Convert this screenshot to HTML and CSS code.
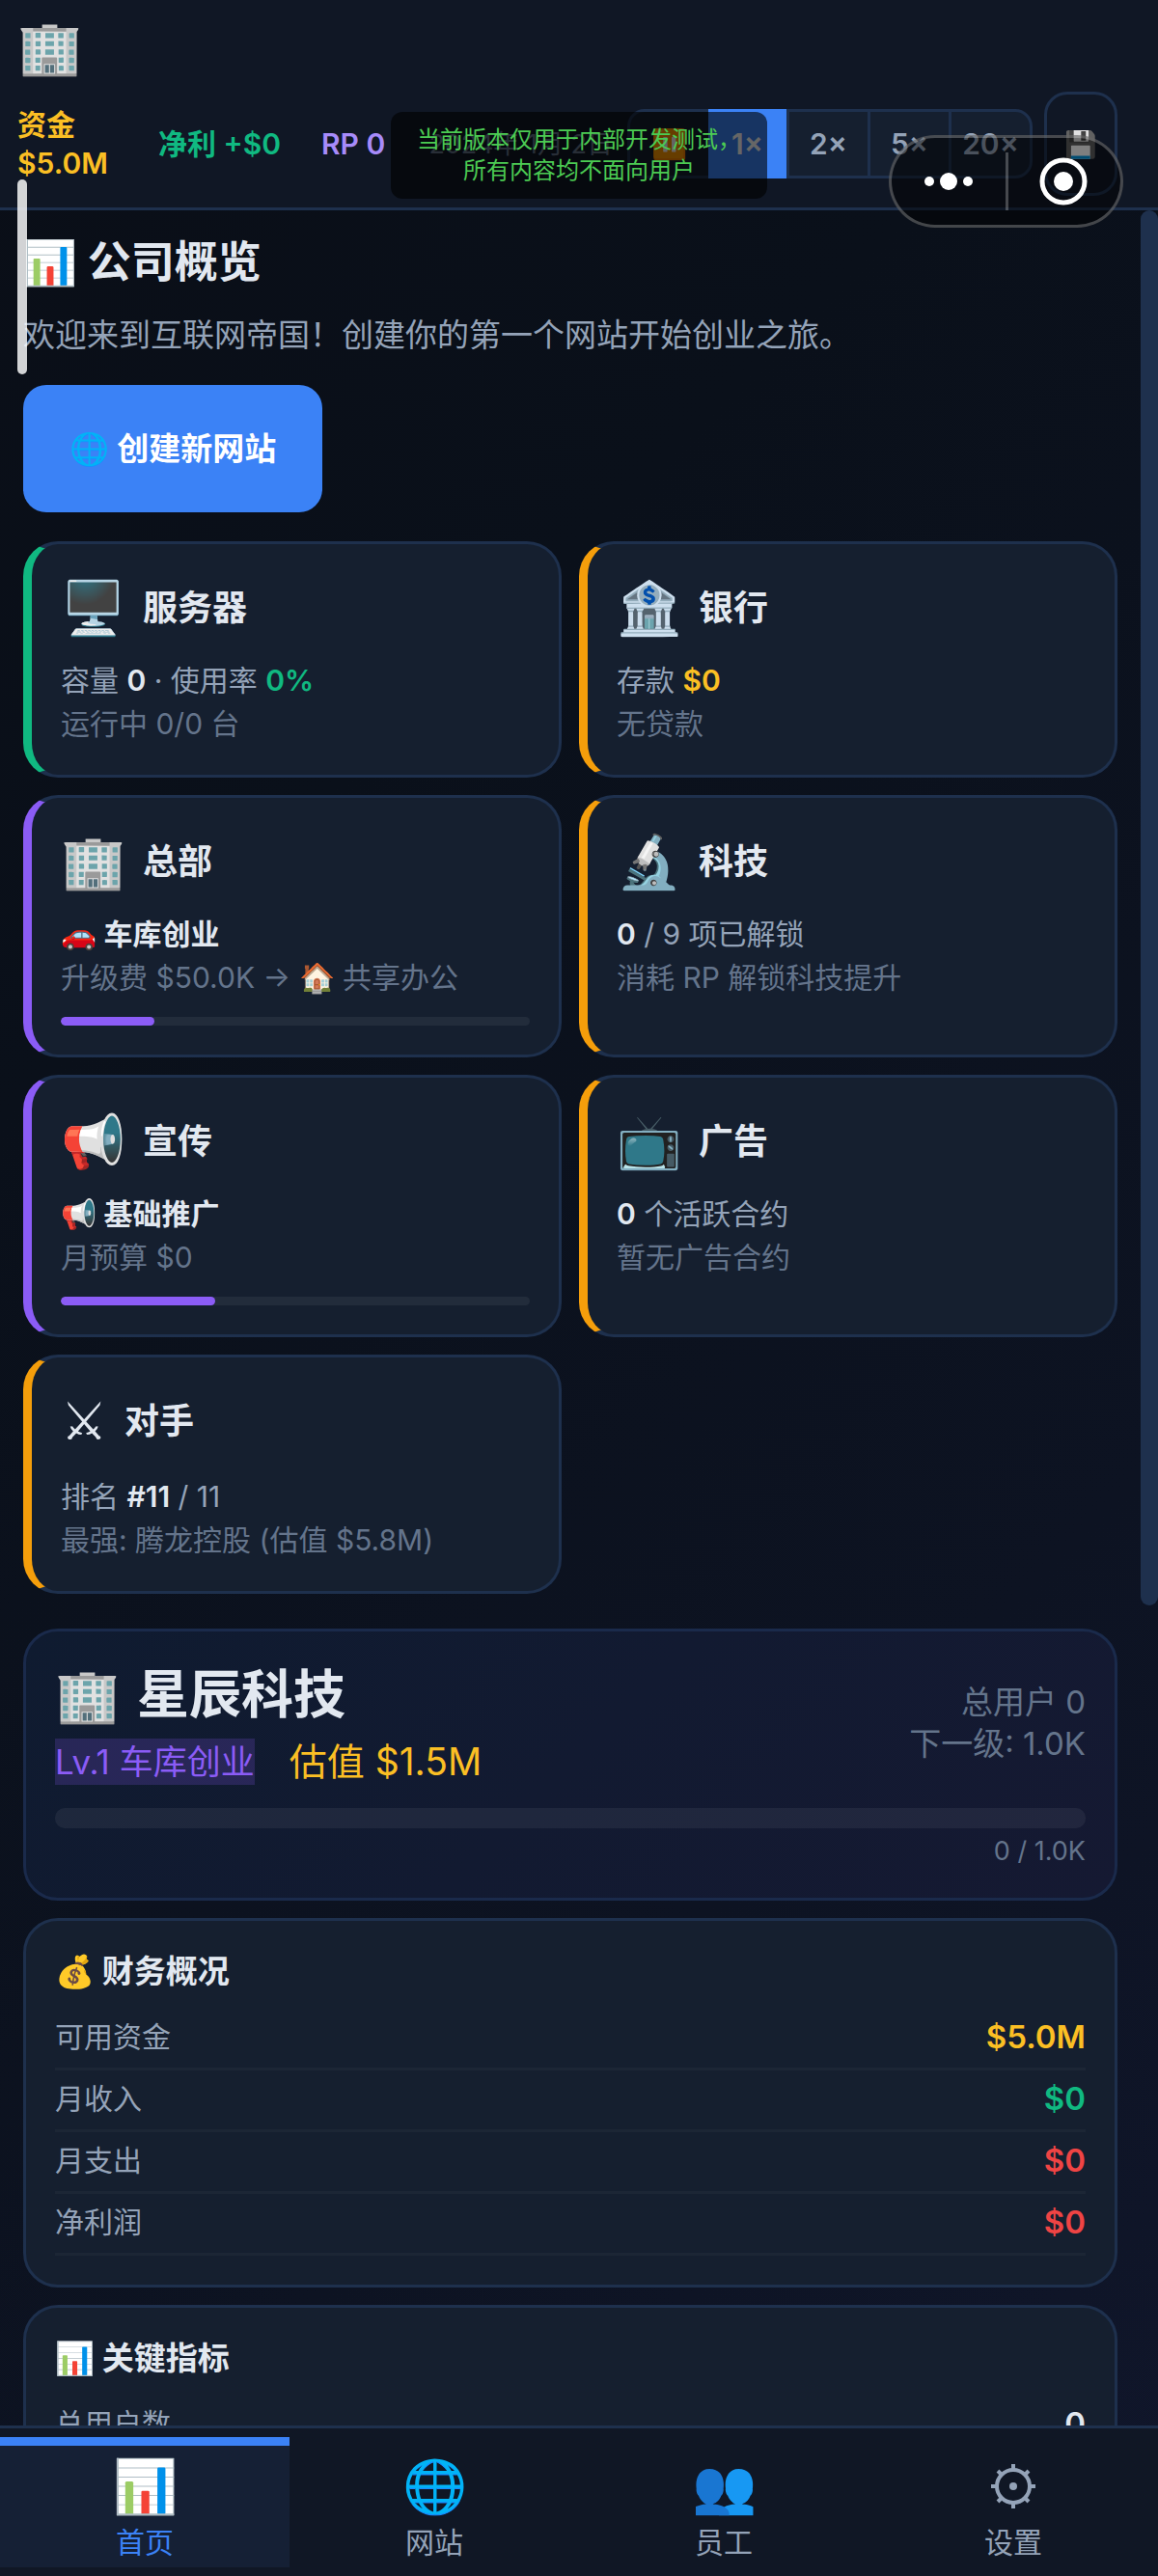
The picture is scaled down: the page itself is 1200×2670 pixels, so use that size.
FILE: index.html
```html
<!DOCTYPE html>
<html lang="zh-CN">
<head>
  <meta charset="UTF-8" />
  <meta name="viewport" content="width=device-width, initial-scale=1.0"/>
  <title>互联网帝国</title>
  <link rel="stylesheet" href="styles.css">
</head>
<body>
  <header class="topbar">
    <div class="logo">🏢</div>
    <div class="status-row">
      <div class="stat cash">资金 $5.0M</div>
      <div class="stat profit">净利 +$0</div>
      <div class="stat rp">RP 0</div>
      <div class="date">2024年 1月 2日</div>
      <div class="speed">
        <button type="button" aria-label="暂停">⏸️</button>
        <button type="button" class="active">1×</button>
        <button type="button">2×</button>
        <button type="button">5×</button>
        <button type="button">20×</button>
      </div>
      <button type="button" class="save" aria-label="保存">💾</button>
    </div>
  </header>

  <div class="viewport">
    <main class="page">
      <h1>📊 公司概览</h1>
      <p class="welcome">欢迎来到互联网帝国！创建你的第一个网站开始创业之旅。</p>
      <button type="button" class="btn-primary">🌐 创建新网站</button>

      <section class="grid">
        <article class="tile green">
          <h2><span class="icon">🖥️</span>服务器</h2>
          <p>容量 <b>0</b> · 使用率 <b class="c-green">0%</b></p>
          <p class="muted">运行中 0/0 台</p>
        </article>
        <article class="tile orange">
          <h2><span class="icon">🏦</span>银行</h2>
          <p>存款 <b class="c-gold">$0</b></p>
          <p class="muted">无贷款</p>
        </article>
        <article class="tile purple">
          <h2><span class="icon">🏢</span>总部</h2>
          <p><b>🚗 车库创业</b></p>
          <p class="muted">升级费 $50.0K → 🏠 共享办公</p>
          <div class="bar"><div class="fill" style="width: 20%"></div></div>
        </article>
        <article class="tile orange">
          <h2><span class="icon">🔬</span>科技</h2>
          <p><b>0</b> / 9 项已解锁</p>
          <p class="muted">消耗 RP 解锁科技提升</p>
        </article>
        <article class="tile purple">
          <h2><span class="icon">📢</span>宣传</h2>
          <p><b>📢 基础推广</b></p>
          <p class="muted">月预算 $0</p>
          <div class="bar"><div class="fill" style="width: 33%"></div></div>
        </article>
        <article class="tile orange">
          <h2><span class="icon">📺</span>广告</h2>
          <p><b>0</b> 个活跃合约</p>
          <p class="muted">暂无广告合约</p>
        </article>
        <article class="tile orange rival">
          <h2><span class="icon">⚔</span>对手</h2>
          <p>排名 <b>#11</b> / 11</p>
          <p class="muted">最强: 腾龙控股 (估值 $5.8M)</p>
        </article>
      </section>

      <section class="card company">
        <div class="company-top">
          <div>
            <h2><span class="icon">🏢</span>星辰科技</h2>
            <div class="company-sub">
              <span class="level">Lv.1 车库创业</span>
              <span class="worth">估值 $1.5M</span>
            </div>
          </div>
          <div class="company-users">总用户 0<br>下一级: 1.0K</div>
        </div>
        <div class="bar big"></div>
        <div class="bar-label">0 / 1.0K</div>
      </section>

      <section class="card">
        <h3>💰 财务概况</h3>
        <div class="row"><span>可用资金</span><b class="c-gold">$5.0M</b></div>
        <div class="row"><span>月收入</span><b class="c-green">$0</b></div>
        <div class="row"><span>月支出</span><b class="c-red">$0</b></div>
        <div class="row"><span>净利润</span><b class="c-red">$0</b></div>
      </section>

      <section class="card">
        <h3>📊 关键指标</h3>
        <div class="row"><span>总用户数</span><b>0</b></div>
      </section>
    </main>
    <div class="scroll-track"><div class="scroll-thumb"></div></div>
  </div>

  <nav class="tabs">
    <a href="#home" class="active"><span class="tab-icon">📊</span>首页</a>
    <a href="#sites"><span class="tab-icon">🌐</span>网站</a>
    <a href="#staff"><span class="tab-icon">👥</span>员工</a>
    <a href="#settings"><span class="tab-icon">
      <svg width="48" height="48" viewBox="0 0 48 48" fill="none" stroke="currentColor" stroke-width="4">
        <circle cx="24" cy="24" r="17"/>
        <circle cx="24" cy="24" r="4" fill="currentColor" stroke="none"/>
        <path d="M24 1v6M24 41v6M1 24h6M41 24h6M8 8l4 4M36 36l4 4M40 8l-4 4M12 36l-4 4"/>
      </svg>
    </span>设置</a>
  </nav>

  <!-- host app overlays -->
  <div class="edge-handle"></div>
  <div class="dev-notice">当前版本仅用于内部开发测试，<br>所有内容均不面向用户</div>
  <div class="capsule">
    <button type="button" aria-label="更多">
      <svg width="54" height="24" viewBox="0 0 54 24" fill="#fff">
        <circle cx="7" cy="12" r="5"/><circle cx="27" cy="12" r="9"/><circle cx="47" cy="12" r="5"/>
      </svg>
    </button>
    <button type="button" aria-label="关闭">
      <svg width="52" height="52" viewBox="0 0 52 52">
        <circle cx="26" cy="26" r="22" fill="none" stroke="#fff" stroke-width="5"/>
        <circle cx="26" cy="26" r="10" fill="#fff"/>
      </svg>
    </button>
  </div>
</body>
</html>
```

FILE: styles.css
```css
* { margin: 0; padding: 0; box-sizing: border-box; }

:root {
  --line: #1e304d;
  --card: #151f2f;
  --bar: #101725;
  --text: #e2e8f0;
  --text2: #94a3b8;
  --muted: #64748b;
  --blue: #3b82f6;
  --green: #10b981;
  --gold: #fbbf24;
  --orange: #f59e0b;
  --purple: #8b5cf6;
  --red: #ef4444;
}

body {
  position: relative;
  height: 100vh;
  display: flex;
  flex-direction: column;
  overflow: hidden;
  background: linear-gradient(135deg, #0a0e17 0%, #0a101a 30%, #0d1322 70%, #10162b 100%);
  color: var(--text);
  font-family: Inter, "Noto Sans CJK SC", sans-serif;
  font-size: 30px;
  line-height: 45px;
}

button { font: inherit; color: inherit; cursor: pointer; }
a { text-decoration: none; }
b { font-weight: 600; }

.c-green { color: var(--green); }
.c-gold { color: var(--gold); }
.c-red { color: var(--red); }

/* top bar */
.topbar {
  background: var(--bar);
  border-bottom: 3px solid var(--line);
  padding: 12px 42px 12px 18px;
}

.logo {
  height: 83px;
  line-height: 74px;
  font-size: 54px;
}

.status-row {
  display: flex;
  align-items: center;
  height: 108px;
  font-weight: 600;
  white-space: nowrap;
}

.stat { margin-right: 42px; line-height: 40px; }
.cash { width: 104px; color: var(--gold); white-space: normal; }
.profit { color: var(--green); }
.rp { color: #a78bfa; }

.date {
  margin-left: auto;
  margin-right: 15px;
  font-size: 27px;
  font-weight: normal;
  color: var(--muted);
}

.speed {
  display: flex;
  height: 72px;
  border: 3px solid var(--line);
  border-radius: 18px;
  margin-right: 12px;
  background: var(--card);
}

.speed button {
  width: 84px;
  margin: -3px 0;
  border: 0;
  border-right: 3px solid var(--line);
  background: none;
  color: var(--text2);
  font-weight: 600;
}
.speed button:first-child { width: 81px; border-right: 0; }
.speed button:last-child { width: 81px; border-right: 0; }
.speed .active { background: var(--blue); color: #fff; }

.save {
  width: 76px;
  height: 108px;
  border: 3px solid var(--line);
  border-radius: 24px;
  background: none;
  font-size: 27px;
}

/* scroll area */
.viewport {
  flex: 1;
  min-height: 0;
  display: flex;
  overflow: hidden;
}

.page {
  flex: 1;
  padding: 24px;
  overflow: hidden;
}

.scroll-track { width: 18px; }
.scroll-thumb {
  height: 63%;
  border-radius: 9px;
  background: var(--line);
}

.page h1 {
  font-size: 45px;
  line-height: 60px;
  margin-bottom: 20px;
}

.welcome {
  font-size: 33px;
  line-height: 50px;
  color: var(--text2);
  margin-bottom: 27px;
}

.btn-primary {
  display: block;
  height: 132px;
  padding: 0 48px;
  border: 0;
  border-radius: 24px;
  background: var(--blue);
  color: #fff;
  font-size: 33px;
  font-weight: 600;
  margin-bottom: 30px;
}

.grid {
  display: grid;
  grid-template-columns: 1fr 1fr;
  gap: 18px;
  margin-bottom: 36px;
}

.tile {
  padding: 30px;
  border: 3px solid var(--line);
  border-left-width: 9px;
  border-radius: 36px;
  background: var(--card);
  color: var(--text2);
}
.tile.green { border-left-color: var(--green); }
.tile.orange { border-left-color: var(--orange); }
.tile.purple { border-left-color: var(--purple); }

.tile h2 {
  display: flex;
  align-items: center;
  gap: 18px;
  height: 72px;
  margin-bottom: 17px;
  color: var(--text);
  font-size: 36px;
}
.tile.rival h2 { margin-bottom: 20px; }
.tile b { color: var(--text); }
.tile .c-green { color: var(--green); }
.tile .c-gold { color: var(--gold); }
.muted { color: var(--muted); }

.icon {
  font-size: 54px;
  font-weight: normal;
  line-height: 72px;
}

.bar {
  height: 9px;
  border-radius: 5px;
  background: rgba(255, 255, 255, 0.06);
  margin-top: 18px;
  overflow: hidden;
}
.bar .fill {
  height: 100%;
  border-radius: 5px;
  background: var(--purple);
}

.card {
  padding: 30px;
  border: 3px solid var(--line);
  border-radius: 36px;
  background: var(--card);
  margin-bottom: 18px;
}

.company {
  background: linear-gradient(135deg, #0f1b30, #151932);
  border-color: #1a2a4b;
}

.company-top {
  display: flex;
  justify-content: space-between;
  align-items: center;
}

.company h2 {
  display: flex;
  align-items: center;
  gap: 18px;
  font-size: 54px;
  line-height: 72px;
}

.company-sub {
  display: flex;
  align-items: flex-end;
  gap: 36px;
  height: 57px;
}

.level {
  font-size: 35px;
  line-height: 48px;
  color: var(--purple);
  background: rgba(139, 92, 246, 0.2);
}

.worth {
  font-size: 39px;
  line-height: 48px;
  color: var(--gold);
}

.company-users {
  text-align: right;
  font-size: 33px;
  line-height: 43px;
  color: var(--muted);
}

.bar.big {
  height: 21px;
  border-radius: 10px;
  margin-top: 24px;
}

.bar-label {
  margin-top: 6px;
  text-align: right;
  font-size: 27px;
  line-height: 36px;
  color: var(--muted);
}

.card h3 {
  font-size: 33px;
  line-height: 44px;
  margin-bottom: 17px;
}

.row {
  display: flex;
  justify-content: space-between;
  align-items: center;
  height: 64px;
  padding-bottom: 3px;
  border-bottom: 3px solid rgba(255, 255, 255, 0.03);
  color: var(--text2);
}
.row b { font-size: 33px; }
.row b:not([class]) { color: var(--text); }

/* bottom tabs */
.tabs {
  display: flex;
  padding: 9px 0;
  border-top: 3px solid var(--line);
  background: var(--bar);
}

.tabs a {
  flex: 1;
  display: flex;
  flex-direction: column;
  align-items: center;
  height: 135px;
  border-top: 9px solid transparent;
  padding-top: 6px;
  color: var(--text2);
}
.tabs .active {
  border-top-color: var(--blue);
  background: #152035;
  color: var(--blue);
}

.tab-icon {
  height: 72px;
  line-height: 72px;
  font-size: 54px;
}
.tab-icon svg { display: block; margin-top: 12px; }

/* overlays */
.edge-handle {
  position: absolute;
  top: 186px;
  left: 18px;
  width: 10px;
  height: 202px;
  border-radius: 5px;
  background: rgba(255, 255, 255, 0.82);
}

.dev-notice {
  position: absolute;
  top: 116px;
  left: 50%;
  width: 390px;
  margin-left: -195px;
  padding: 13px 0;
  border-radius: 12px;
  background: rgba(0, 0, 0, 0.6);
  color: #4ccb53;
  font-size: 24px;
  line-height: 32px;
  text-align: center;
}

.capsule {
  position: absolute;
  top: 140px;
  right: 36px;
  display: flex;
  width: 243px;
  height: 96px;
  border: 3px solid rgba(255, 255, 255, 0.25);
  border-radius: 48px;
  background: rgba(0, 0, 0, 0.5);
}
.capsule button {
  flex: 1;
  display: flex;
  align-items: center;
  justify-content: center;
  border: 0;
  background: none;
}
.capsule button + button::before {
  content: "";
  position: absolute;
  left: 118px;
  width: 3px;
  height: 60px;
  background: rgba(255, 255, 255, 0.25);
}
```
